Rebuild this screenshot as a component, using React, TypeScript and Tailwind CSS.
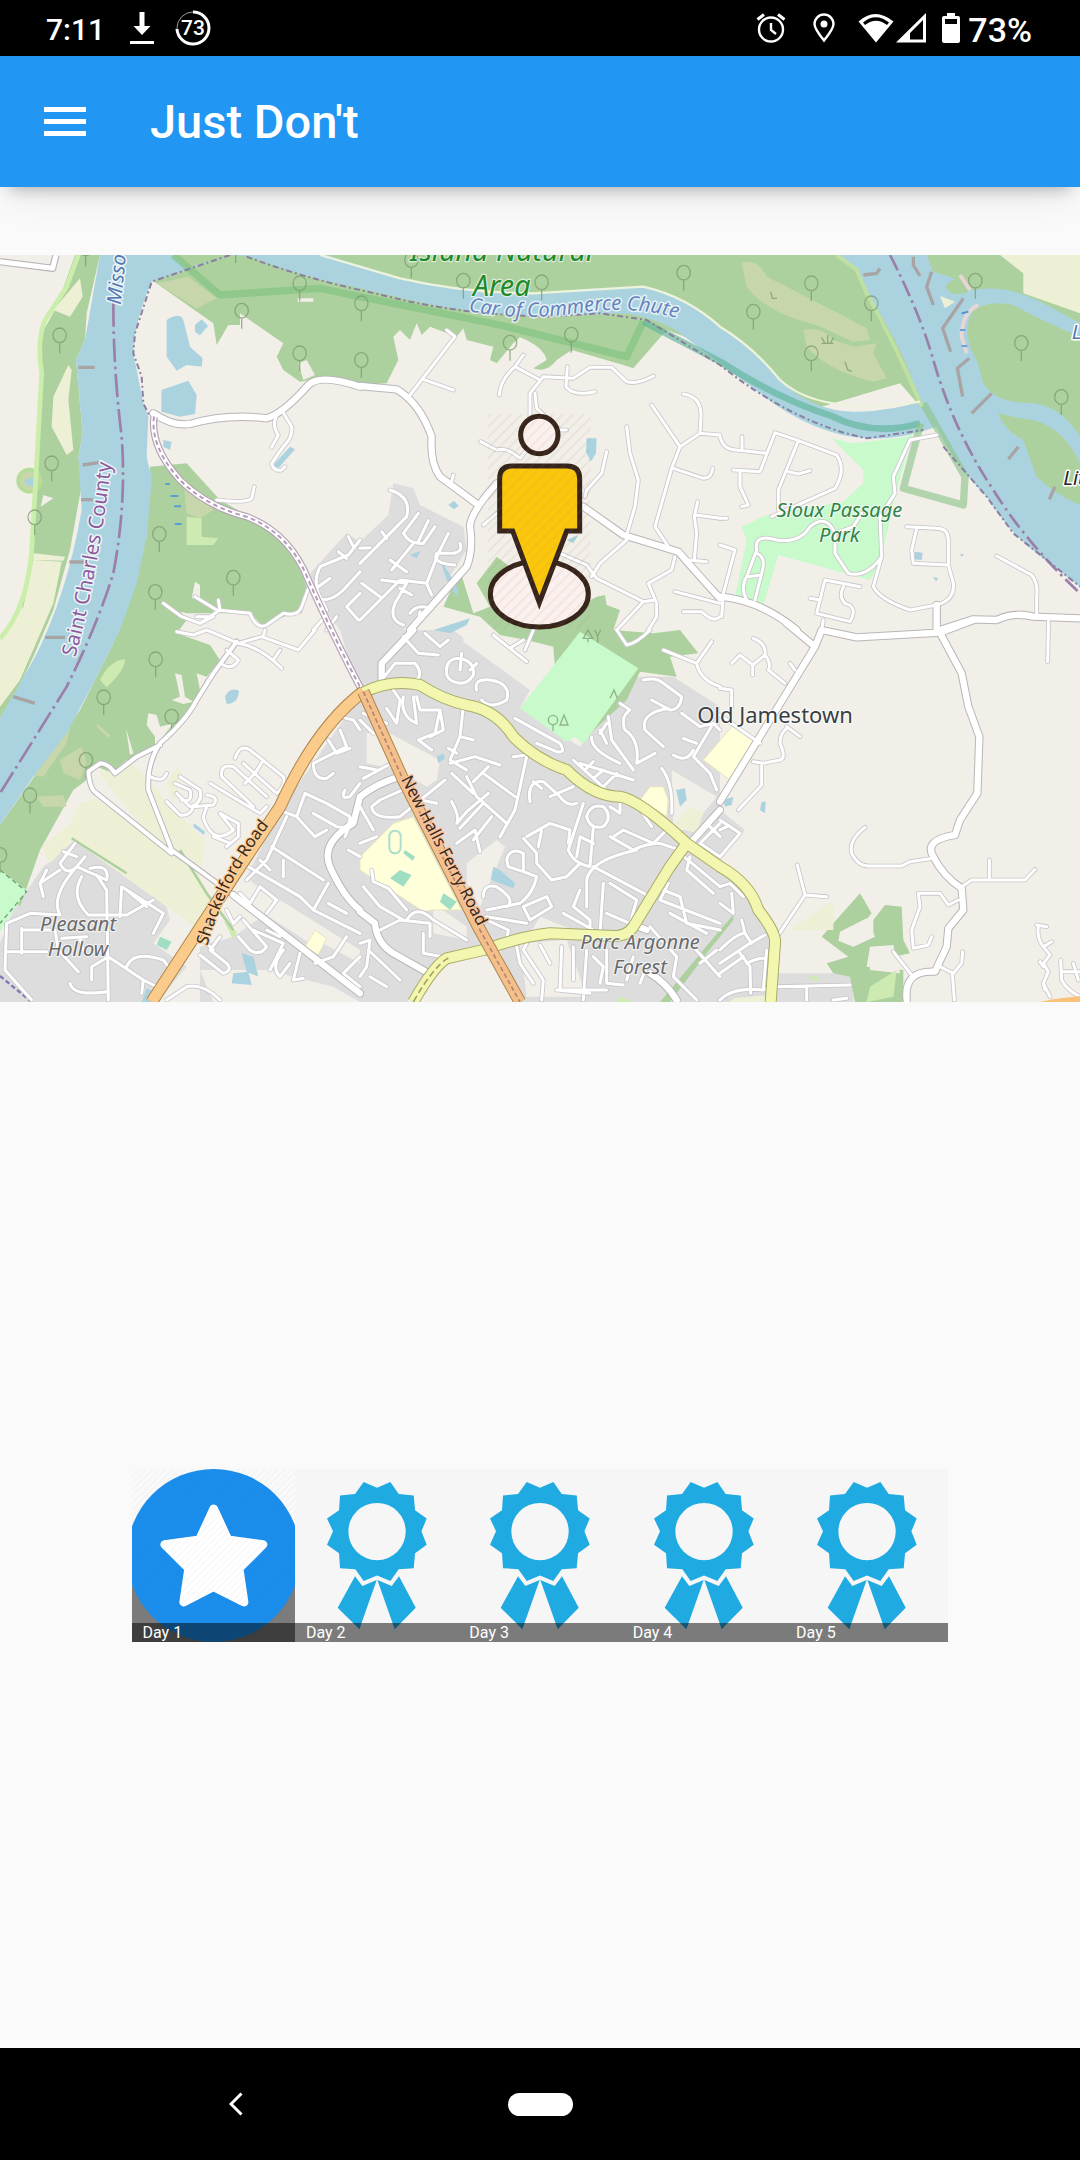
import React from "react";

/* ---------- Map data: six tiles of 1080 x 1140 map units each ---------- */

const TILES = [
  "translate(0 0)",
  "translate(1080 0)",
  "translate(2160 0)",
  "translate(0 1140)",
  "translate(1080 1140)",
  "translate(2160 1140)",
];

const MINOR: string[] = [
  // north west
  "M845,480 L875,530 Q880,560 850,590 L815,640 Q820,665 845,660 L855,650 M838,485 Q810,520 835,555 L815,592 M650,750 Q740,760 755,745 L763,710 M1080,870 L1045,915 L960,950 Q940,990 955,1030 L980,1080 M1045,860 L1060,890 M1015,905 L1040,925 M955,1010 L990,985 M965,1050 Q1000,1050 1030,1020 L1080,965 M1080,1030 L1040,1070 L1075,1110 M975,1100 L940,1140 M980,1140 L1010,1100 M585,1040 L650,1080 L750,1090 Q770,1140 800,1125 L850,1090 Q895,1100 905,1070 L925,1015 M590,1100 L640,1100 L600,1120 L660,1080 L655,1050 M490,1060 L545,1100 L600,1120",
  // north centre
  "M260,240 L285,260 L150,435 M190,388 L280,420 M490,315 L465,350 L540,390 M465,350 Q420,390 418,435 M510,500 L510,430 L550,380 L640,385 L690,352 L755,352 L800,395 Q830,405 880,378 M622,350 L618,410 Q640,440 705,425 M525,430 L530,475 L600,540 L620,540 M362,575 L410,600 Q440,590 480,625 L500,600 M970,432 Q1025,440 1023,500 L1020,550 L960,590 L875,465 M1020,550 L1080,555 M960,590 L935,655 L885,830 L925,890 M940,655 L1030,685 Q1055,685 1058,655 M800,530 L810,610 L835,690 L825,770 L800,855 M740,605 L725,670 L680,720 L675,740 M800,870 L720,940 L695,980 M600,910 L680,945 L710,985 L850,1055 L770,1140 M945,920 L935,960 L865,1000 L890,1060 L890,1100 L865,1140 M850,1055 L885,1050 M1013,755 L1003,800 L1010,850 L1003,930 M1008,795 L1080,805 M985,930 L1040,935 M945,1025 L1080,1060 M970,1085 L1025,1085 Q1060,1120 1080,1100 M410,790 L370,825 M280,675 L275,695 M0,940 L140,800 Q155,740 90,720 M65,845 L80,865 M0,895 L30,893 M175,790 L130,850 Q150,885 190,880 L225,830 M205,812 L175,875 M160,880 L95,960 M265,850 L235,910 L200,1000 L120,990 L0,1110 M90,930 L140,965 M65,990 L140,1000 L105,1060 Q85,1110 130,1125 M5,1000 L60,1040 M120,1015 L155,1035 M300,880 Q310,905 280,910 L230,910 Q215,940 285,945 M200,1000 L215,1035 M150,1090 Q170,1060 215,1075 M180,1085 L175,1115",
  // north east
  "M0,560 Q10,600 50,600 L140,610 M66,560 L66,600 M235,572 L175,720 L175,780 M205,665 L235,672 L270,662 M155,800 L345,715 Q380,660 350,615 L235,572 L165,548 L120,665 L40,660 M60,665 L60,710 L85,765 L65,770 M650,555 L570,570 L520,680 L525,730 L480,800 L485,920 Q440,985 385,970 L345,910 L345,850 L400,830 L425,790 M345,850 Q320,790 270,830 Q240,880 170,870 Q100,850 110,900 L80,980 Q60,1010 80,1050 M110,910 Q140,920 125,970 L105,1050 M85,980 L125,975 M485,920 L460,1010 Q480,1050 570,1080 L650,1065 M560,830 L650,835 Q685,835 685,870 L685,945 L580,940 L575,900 L590,835 M685,945 L700,1000 Q705,1050 650,1065 M830,918 L935,975 Q955,1000 950,1040 L950,1100 M0,885 L45,900 L10,1030 L5,1100 M420,1010 L315,990 L290,1090 L390,1115 Q415,1070 375,1060 Q355,1040 370,1010 M270,1045 L300,1050 M310,1110 L305,1140 M985,1110 L985,1140 M0,805 L20,805",
  // south west
  "M530,5 L580,15 L620,0 L715,40 M715,40 L785,20 L895,60 L945,0 M790,20 L795,0 M715,40 Q780,50 845,115 M820,90 L840,60 M680,60 L715,90 Q700,120 670,105 M450,440 Q490,460 500,430 M705,385 Q720,340 750,360 L850,440 Q860,465 830,490 L730,400 M665,440 Q660,400 700,410 L800,500 M665,440 L760,530 M765,430 L790,390 M735,460 L765,430 M630,460 L780,550 L800,530 M525,460 L570,480 Q580,520 545,510 M540,440 L600,480 Q610,520 570,530 L530,490 M500,515 L540,555 Q570,560 580,530 L640,525 Q660,500 620,495 M610,560 L620,530 M610,565 Q640,650 700,600 L660,550 L715,580 L715,620 L680,650 M640,620 L690,640 M225,640 L180,700 Q200,740 230,710 L255,680 M190,665 L230,680 M180,720 L120,760 L130,800 M140,720 L120,760 M230,710 L320,750 Q330,700 270,715 M230,710 Q150,800 180,855 L90,850 M245,740 Q210,800 265,855 M290,735 L320,780 L325,1110 M265,855 L380,855 L460,810 M360,860 L365,770 L490,850 L460,910 M380,780 L440,830 M90,850 L20,880 L15,1020 L95,1110 M65,895 L65,970 M65,900 L150,900 M20,965 L140,965 M165,900 L175,960 L235,1025 M185,925 L260,920 M240,925 L250,960 M325,980 L275,1010 L275,1050 M325,980 L430,1050 L470,1070 M380,1010 Q400,960 490,990 L505,1010 M430,1050 L425,1090 M210,1060 Q220,1100 320,1085 M600,975 L670,1030 Q700,1020 680,1000 L630,960 L660,920 M610,930 L640,960 M730,870 L800,950 Q780,980 750,960 L715,920 M760,900 L850,940 L810,1020 M800,900 L840,920 M680,840 L700,880 L720,860 M1020,260 L1060,270 L1080,300 M985,330 L1010,370 L1050,355 M1020,300 L1040,350 L940,400 Q940,450 980,445 L1000,430 M850,545 L890,560 L915,490 L980,520 L1050,560 Q1050,600 1010,590 L940,550 M890,560 L945,620 L980,600 M860,560 L800,690 L740,750 M815,650 L970,750 M850,690 L850,740 M1070,540 L1035,620 M1045,660 L1080,680 M745,710 L900,800 L940,840 L985,760 M780,690 L810,720 M940,840 L1080,910 M985,820 L1040,850 M850,960 Q810,1010 840,1040 L870,1000 M900,970 L880,1050 L910,1045 M945,1000 L1000,980 L1040,920 M1080,980 L1030,1030 L1080,1070 M500,1110 L560,1070 Q610,1060 660,1110 M720,790 L750,820 L780,770 L830,810 L800,850 M1035,480 Q1020,510 1050,500 L1080,460",
  // south centre
  "M130,20 L175,70 L235,75 M195,10 L240,50 L265,30 M65,150 L105,100 L165,100 Q190,130 170,150 M260,130 Q255,85 300,85 Q345,95 340,135 Q320,170 280,155 Q260,145 260,130 M305,70 L300,120 M350,100 L330,120 M350,180 Q340,145 390,150 Q455,160 440,210 Q390,240 365,210 M400,15 L450,55 L500,95 M450,55 L490,30 M520,0 L495,60 M770,0 L800,45 Q830,40 870,0 M1055,35 L1010,100 L910,60 M1010,100 Q1020,150 1080,170 M850,150 Q890,140 910,160 L965,200 Q960,240 930,240 L875,210 M925,235 Q840,250 855,300 L910,350 M965,250 L1020,290 L1060,280 L1080,300 M1060,280 L1000,380 L1050,430 L1070,480 M940,375 Q980,400 1000,360 M970,325 L1010,340 M780,220 L810,240 Q780,260 795,300 Q840,330 830,400 L885,370 M745,260 L755,330 L820,420 M695,320 Q690,360 780,400 M740,280 L720,310 M465,265 L600,340 Q620,370 590,365 L530,340 M460,380 L500,375 M640,390 L750,490 M660,400 L820,450 M700,395 L675,420 M730,420 L700,445 M770,430 L735,465 M80,235 L110,280 L120,210 L100,180 M130,200 Q120,260 170,280 L160,200 M170,200 L180,240 L240,240 L225,310 L175,330 L215,360 M240,240 L250,300 L210,320 M310,230 L300,320 L270,390 L320,420 M300,320 L340,330 M270,400 L345,380 L420,405 M265,355 L290,370 M500,380 L465,540 L420,620 M320,440 L350,500 L440,580 M275,430 L340,490 M370,430 L465,500 M340,455 L385,410 M255,450 L120,560 Q40,570 35,530 L60,510 M60,510 L150,470 M180,510 L230,520 M275,515 Q300,560 290,580 L320,545 M320,545 L385,490 M300,595 L370,520 M340,630 L395,560 M290,640 L345,600 L360,665 M510,515 Q500,450 550,455 L600,500 Q620,530 650,520 M570,500 L640,470 M545,475 L520,455 M680,560 Q690,520 730,530 Q760,560 730,590 Q690,600 680,560 M750,530 L780,550 M500,620 L570,580 L630,600 L625,640 M490,625 L530,670 L530,700 L575,750 L620,740 L660,700 M535,650 L545,600 M670,520 L625,660 Q640,700 690,710 L700,590 M650,680 L660,620 L700,640 M440,690 Q450,650 490,670 L490,725 L445,710 L440,690 M490,725 L530,740 Q520,790 480,820 L380,840 M370,800 Q370,760 410,770 Q470,810 440,830 M490,830 L560,800 L575,830 L510,870 L490,830 M500,880 L380,860 M750,620 L820,660 Q860,640 900,640 L960,660 M760,620 L790,600 L880,640 L920,600 M830,660 Q690,690 680,750 L680,830 M700,710 L870,800 M730,760 L720,910 M660,780 L640,830 L690,870 M750,760 L830,810 L810,880 L740,850 M610,850 L700,900 M690,870 L690,930 M10,250 L80,280 M0,270 L40,310 M0,410 L50,420 M10,445 L85,405 M0,530 L40,600 M0,640 L50,620 M960,670 L1080,770 M990,680 L980,720 L1060,790 M910,780 L960,800 L980,880 L1080,900 M925,760 L900,810 L1080,880 M930,850 L1040,910 M870,890 L950,980 M950,980 L940,1040 L1010,1110 M1000,950 L1080,1040 M1020,1000 L1070,960 M35,720 L40,755 L85,775 M10,770 L60,830 L130,870 M85,775 L140,840 M140,870 Q170,820 220,870 L320,930 M60,900 L120,870 L210,880 L210,920 M190,910 L190,970 L270,985 M0,940 L30,930 L20,1010 L0,1040 M30,1040 L80,1070 M25,960 L120,1050 M500,940 L490,960 L550,1050 L545,1110 M470,950 L480,1000 L520,1060 M540,945 L570,1000 M605,950 L600,1080 L740,1080 M640,950 L640,1050 M590,1080 L690,1090 M680,960 L670,1110 M700,980 L730,1010 L720,1060 M740,960 L740,1060 L790,1065 M820,980 L800,1050 M860,1010 L840,1060 M440,930 L445,900 L380,870 M720,300 L740,340 M845,545 L875,590 M780,520 L780,550 M905,415 Q940,460 935,550 M1080,580 L1020,640 M1050,590 L1080,620 M1020,640 L1080,680",
  // south east
  "M100,25 Q140,40 135,75 L98,105 L98,135 M98,105 L60,75 L35,100 M135,75 Q155,100 145,120 L195,160 M210,100 L225,120 M0,175 L35,180 L35,230 M0,255 L120,340 M200,290 L240,320 M200,295 Q180,310 180,340 Q200,385 180,390 L130,400 L100,395 M125,405 L125,465 L55,540 M985,0 L983,95 M435,592 Q385,630 395,670 Q415,710 450,708 L545,708 L570,695 L640,685 M725,770 L755,750 L915,750 L945,718 M808,690 L808,750 M715,810 L685,825 L660,790 L595,790 L600,830 L575,900 L580,955 L625,945 L635,920 M232,705 L255,795 L320,800 M255,795 L175,915 M520,965 L575,1035 M728,965 L725,1000 L700,1030 L660,1010 M697,1030 L703,1110 M950,885 L980,890 M955,890 Q950,925 970,950 L990,975 L970,1000 L985,1025 L970,1060 L990,1100 M970,950 L995,935 M960,995 L970,1010 M970,1060 L975,1080 M1022,990 L1025,1050 Q1040,1080 1080,1100 M1025,1025 L1080,1025 M1060,1000 L1075,1050 M0,570 L60,610 L0,680 M0,600 L20,590 M0,770 L30,760 L70,800 M0,820 L40,850 L35,790 M65,870 L75,910 L95,940 M135,915 L90,940 L0,1000 M0,1030 L70,980 M60,970 L90,1010 L92,1090 M80,1000 Q110,985 130,985 M140,960 L130,1080 M0,1110 Q40,1070 130,1080 L165,1070 L390,1065 M260,1075 L260,1110 M340,1110 L380,1105 M0,960 Q50,910 75,910",
];

const MEDIUM: string[] = [
  "M460,490 Q520,530 570,522 Q680,490 800,505 Q850,490 925,405 Q960,370 1080,410",
  "M0,408 L110,418 Q180,460 215,560 Q210,640 240,680 L355,765 M150,1140 L320,950 Q340,900 330,830 Q330,790 410,700 M670,770 L790,855 L955,905 Q1020,980 1080,1045",
  "M0,1040 Q120,1050 230,1140 M660,1140 L760,1108 L830,1110 Q880,1085 940,1100 L1080,1105 M650,1065 L650,1140",
  "M700,795 L1080,1090 M1080,500 L1060,580 Q960,640 990,710 Q1030,800 1080,840",
  "M160,0 L65,100 L65,150 M0,500 Q50,460 120,440 M0,845 L45,880 Q50,940 100,970 L215,1035 M835,890 L860,900 M870,1030 Q920,1060 950,1110 M990,640 L1080,540",
  "M0,515 L285,50 L305,0 M200,-20 L285,50 M305,0 L410,22 L660,8 L760,-30 M660,8 L725,130 L745,230 L778,320 L772,490 L720,570 L705,615 Q610,630 640,680 Q670,740 725,775 L730,840 L685,895 L680,950 L645,1025 Q550,1020 560,1110",
];

const LOCAL: string[] = [
  "",
  "",
  "",
  "M710,35 L640,130 L590,210 Q560,270 480,340 Q440,400 445,480 L515,660 L700,795 M480,345 L410,380 L345,430 Q325,400 300,400 L265,425 Q270,480 290,490 L515,670",
  "",
  "",
];

const TREES: [number, number][] = [
  [179, 256], [155, 640], [104, 802], [478, 852], [466, 1026], [700, 983], [899, 100], [899, 310],
  [725, 182], [257, -5], [707, -15], [1084, 330], [1084, 160], [1234, 30], [1390, 92], [1625, 97],
  [2051, 68], [1714, 254], [1530, 278], [2260, 185], [2434, 100], [2434, 310], [2614, 160],
  [2926, 92], [3064, 279], [3184, 441], [467, 1228], [311, 1342], [515, 1400], [90, 1636],
  [258, 1530], [0, 1815],
];

function Tiled({ paths, stroke, width }: { paths: string[]; stroke: string; width: number }) {
  return (
    <g fill="none" stroke={stroke} strokeWidth={width} strokeLinecap="round" strokeLinejoin="round">
      {paths.map((d, i) => (d ? <path key={i} d={d} transform={TILES[i]} /> : null))}
    </g>
  );
}

function Line({ d, stroke, width, dash, opacity }: { d: string; stroke: string; width: number; dash?: string; opacity?: number }) {
  return <path d={d} fill="none" stroke={stroke} strokeWidth={width} strokeDasharray={dash} opacity={opacity} strokeLinejoin="round" />;
}

function Landcover() {
  return (
    <g>
      {/* residential */}
      <g fill="#dedddd">
        <path d="M1180,700 L1240,715 L1260,765 L1390,830 L1400,900 L1330,1010 L1210,1140 L1360,1140 L1590,1320 L1560,1375 L1740,1490 L1820,1360 L1910,1280 L2020,1280 L2160,1370 L2160,1680 L2235,1740 L2160,1830 L2260,1920 L2320,2060 L2320,2170 L2560,2170 L2560,2256 L1560,2256 L1500,2100 L1350,2110 L1220,2256 L600,2256 L600,2090 L700,2060 L800,1990 L1080,2140 L1080,2100 L760,1900 L740,1880 L840,1680 L1080,1340 L1020,1140 L960,1060 L930,970 L1040,850 L1080,875 L1165,795 Z" />
        <path d="M0,2080 L40,1980 L130,1850 L225,1770 L500,1970 L510,2010 L460,2080 L560,2150 L470,2256 L0,2256 Z" />
        <path d="M2320,2190 L2560,2170 L2560,2256 L2320,2256 Z" />
      </g>
      {/* open land inside the suburb */}
      <g fill="#f2efe9">
        <path d="M1390,1140 L1640,1140 L1670,1160 L1590,1320 L1390,1175 Z" />
        <path d="M1100,1450 L1150,1440 L1320,1530 L1310,1590 L1280,1610 L1200,1560 L1100,1540 Z" />
        <path d="M1490,1770 L1515,1790 L1440,1970 L1400,1900 L1400,1840 Z" />
        <path d="M2015,1560 L2150,1640 L2070,1740 L2020,1740 Z" />
        <path d="M1620,2000 L1720,2040 L1590,2050 Z" />
        <path d="M850,1970 L970,2050 L930,2080 L790,1990 Z" />
        <path d="M1300,1960 L1400,2030 L1400,2070 L1300,2050 Z" />
        <path d="M1300,2160 L1470,2120 L1560,2256 L1240,2256 Z" />
        <path d="M600,2160 L800,2160 L1000,2210 L1080,2256 L640,2256 Z" />
        <path d="M1560,2080 L1700,2070 L1760,2240 L1580,2240 Z" />
      </g>
      {/* woodland */}
      <g fill="#add19e">
        <path d="M225,15 L300,15 L260,190 L255,270 L228,330 L248,550 L235,620 L248,690 L210,900 L160,1080 L100,1220 L40,1345 L0,1405 L0,1200 L60,1110 L95,900 L110,640 L125,370 L120,260 L170,170 Z" />
        <path d="M500,15 L1200,15 L1900,15 L3240,15 L3240,800 L2840,560 L2700,400 L2400,490 L2160,300 L2000,240 L1900,355 L1870,345 L1715,300 L1670,330 Q1640,370 1600,355 L1640,330 Q1630,290 1560,262 L1540,280 L1490,340 L1470,330 L1480,290 L1400,270 L1390,235 L1370,260 L1290,230 L1265,255 L1250,220 L1230,270 L1200,240 L1180,260 L1195,330 L1160,400 L1080,405 L960,385 L900,395 L850,360 L830,320 L850,280 L720,190 L720,225 L685,225 L650,285 L640,220 L455,90 Z" />
        <path d="M450,650 L560,640 L660,750 L800,830 Q900,920 925,1030 L905,1090 L850,1100 L790,1130 L750,1090 L655,1090 L560,1090 L490,1070 L545,900 L570,910 L510,1040 L560,1110 L530,1150 L630,1185 L660,1230 L620,1280 L590,1350 L470,1490 L340,1570 L290,1550 L260,1590 L220,1620 L120,1800 L60,1970 L0,1880 L0,1725 L110,1570 L240,1380 L340,1180 L370,1090 L440,860 Z" />
        <path d="M1490,920 L1530,950 L1480,990 L1530,1060 L1700,1090 L1790,1040 L1815,1035 L1820,1065 L1860,1080 L1840,1140 L1960,1150 L2040,1140 L2095,1210 L2010,1220 L2030,1280 L1920,1265 L1880,1350 L1760,1460 L1670,1320 L1660,1190 L1580,1170 L1500,1155 L1440,1100 L1330,1070 L1380,960 L1420,1090 L1470,1070 L1430,1000 Z" />
        <path d="M2580,1930 L2615,1990 L2590,2020 L2520,2070 L2550,2080 L2620,2060 L2620,2010 L2655,1965 L2705,1970 L2710,2070 L2730,2110 L2680,2120 L2610,2090 L2600,2150 L2710,2160 L2710,2256 L2565,2256 L2550,2180 L2500,2170 L2480,2140 L2545,2120 L2465,2060 L2500,2020 Z" />
        <path d="M1980,2256 L2160,2040 L2200,1995 L2200,2010 L2120,2110 L2010,2256 Z" />
      </g>
      <g fill="#f2efe9">
        <path d="M525,1270 L545,1275 L555,1340 L580,1355 L550,1362 L515,1350 L540,1340 Z" />
        <path d="M445,1390 L470,1395 L480,1430 L520,1420 L465,1490 L465,1460 L440,1425 Z" />
        <path d="M590,1270 L620,1280 L600,1320 Z M585,995 L600,1005 L600,1050 L575,1045 Z M378,1435 L400,1510 L390,1515 Z" />
        <path d="M895,340 L920,330 L945,375 L910,390 Z M893,145 L940,145 L940,155 L893,155 Z M130,735 L160,745 L122,770 Z" />
        <path d="M2520,2045 L2600,2005 L2625,2060 L2560,2090 L2515,2072 Z M2610,2090 L2680,2085 L2700,2170 L2610,2160 Z" />
      </g>
      {/* farmland */}
      <g fill="#eef0d5">
        <path d="M240,85 L248,140 L210,200 L160,180 Z" />
        <path d="M205,345 L215,360 L205,450 L220,600 L200,615 L155,530 L160,440 Z" />
        <path d="M100,930 L185,935 L160,1060 L60,1290 L0,1370 L0,1160 L70,1070 Z" />
        <path d="M100,910 L195,920 L190,932 L100,930 Z" />
        <path d="M3000,15 L3240,15 L3240,190 L3070,130 L3070,70 Z" />
        <path d="M290,1560 L340,1565 L380,1530 L440,1580 L520,1680 L615,1770 L605,1860 L560,1830 L450,1760 Z" />
        <path d="M500,1600 L530,1550 L545,1570 L520,1660 Z" />
        <path d="M290,1645 L500,1790 L600,1880 L640,1960 L600,2040 L220,1770 L150,1840 L125,1790 L210,1720 L240,1660 Z" />
        <path d="M2500,1950 L2500,2040 L2370,2040 Z M2070,1670 L2110,1690 L2090,1750 L2020,1730 Z M2200,2245 L2310,2235 L2310,2256 L2190,2256 Z" />
      </g>
      <g fill="#cdebb0">
        <path d="M560,800 L605,805 L605,860 L655,865 L640,885 L560,885 Z" />
        <path d="M300,1290 Q330,1230 375,1228 Q375,1260 320,1312 Z" />
        <path d="M670,2010 L710,2045 L700,2070 Z M2610,2210 L2690,2160 L2680,2240 L2600,2256 Z M1860,2240 L1900,2256 L1850,2256 Z M2420,2180 L2460,2180 L2450,2195 Z" />
      </g>
      {/* scrub and sand bars */}
      <g fill="#c8d7ab">
        <path d="M470,100 L565,80 L650,145 L590,175 Z" />
        <path d="M550,690 L640,780 L600,805 L560,790 Z" />
        <path d="M2225,40 Q2270,20 2300,80 Q2460,160 2600,235 L2610,270 L2560,275 L2450,225 Q2300,190 2240,110 Z" />
        <path d="M2410,240 Q2470,230 2500,270 L2560,290 L2630,280 L2620,310 L2660,385 L2620,395 Q2480,360 2420,290 Z" />
        <path d="M210,1430 L200,1480 L130,1580 L100,1575 Z M180,1530 L245,1490 L260,1540 L240,1590 L190,1570 Z M110,1640 L190,1635 L200,1670 L130,1670 Z M290,1420 L330,1455 L325,1465 L290,1430 Z" />
      </g>
      <circle cx="88" cy="692" r="34" fill="#c8d7ab" stroke="#b4dd96" strokeWidth="10" />
      {/* parks */}
      <g fill="#c8facc">
        <path d="M1740,1145 L1915,1255 L1750,1482 L1725,1460 L1700,1475 L1560,1375 Z" />
        <path d="M2495,565 L2560,580 L2720,560 L2740,545 L2690,720 L2640,940 L2610,990 L2335,915 L2290,1065 L2205,1040 L2240,870 L2225,830 L2300,795 L2530,755 L2590,700 L2590,660 Z" />
        <path d="M0,1860 L80,1920 L0,2045 Z" />
      </g>
      <g fill="#ffffd9" stroke="#e6e3c0" strokeWidth="3">
        <path d="M1180,1720 L1240,1700 L1385,1980 L1300,1980 L1270,1985 L1080,1860 L1080,1820 Z" />
        <path d="M2200,1425 L2270,1480 L2190,1590 L2110,1530 Z" />
        <path d="M1950,1610 L1990,1610 L2005,1650 L2000,1700 L1920,1650 Z" />
        <path d="M945,2040 L980,2065 L955,2115 L915,2090 Z" />
      </g>
      <g fill="#a0dec4">
        <path d="M1200,1860 L1235,1875 L1210,1910 L1170,1885 Z M1330,1930 L1370,1955 L1350,1980 L1320,1955 Z M1215,1800 L1245,1820 L1238,1832 L1210,1810 Z" />
        <path d="M480,2060 L515,2075 L500,2100 L470,2085 Z" />
      </g>
      <rect x="1168" y="1742" width="34" height="68" rx="17" fill="none" stroke="#a9e0cb" strokeWidth="6" />
    </g>
  );
}

function Water() {
  return (
    <g>
      <g fill="#aad3df">
        <path d="M300,15 L520,15 L560,55 L690,15 L980,15 L1200,85 Q1400,130 1600,130 L1780,115 L1930,110 Q2060,140 2160,230 Q2260,290 2340,390 Q2440,490 2580,485 Q2680,480 2760,455 Q2710,290 2600,130 Q2580,50 2510,15 L2780,15 L2800,65 L2850,80 L2920,120 Q3020,100 3140,165 L3240,220 L3240,260 Q3120,210 3040,165 Q2970,150 2920,180 Q2880,250 2930,330 L2950,400 Q2990,460 3080,458 Q3180,460 3240,560 L3240,640 Q3180,510 3060,505 L2995,490 Q3010,540 3070,570 L3110,680 Q3160,730 3240,765 L3240,1010 L3110,910 Q3030,850 2960,740 Q2860,640 2810,530 Q2700,570 2600,565 Q2440,555 2280,430 L2160,340 L2060,265 Q1980,200 1860,190 L1640,200 Q1400,190 1230,150 L1080,115 Q900,80 750,20 L690,15 L455,95 Q425,160 405,250 L400,310 L430,460 L445,500 L440,620 L455,690 L440,860 L410,1000 L360,1140 L280,1300 L200,1450 L100,1580 L0,1725 L0,1405 L100,1230 Q200,1040 245,780 L235,620 L248,550 L228,330 L255,270 Z" />
        <path d="M500,210 Q540,185 550,210 L570,290 L608,325 L605,350 L560,345 L530,362 L500,320 Z M585,225 L605,208 L624,228 L600,256 L585,245 Z M484,420 L565,392 L590,435 L585,492 L540,500 L484,485 Z" />
        <path d="M870,590 L885,598 L835,655 L820,645 Z M490,570 L515,575 L510,600 L490,590 Z M72,690 L110,680 L100,710 L80,705 Z M435,625 L455,675 L440,690 Z" />
        <path d="M1760,565 L1790,565 L1788,610 L1772,635 L1758,605 Z M1345,765 L1362,752 L1376,768 L1362,778 Z M1230,915 L1262,902 L1250,925 Z M1320,930 L1345,965 L1375,1020 L1370,1040 L1340,990 Z M1700,870 L1735,855 L1720,880 Z M1300,1140 L1410,1105 L1400,1125 L1350,1150 Z" />
        <path d="M2745,905 L2768,908 L2765,930 L2742,928 Z M2800,980 L2815,985 L2808,995 Z M2880,912 L2892,912 L2885,920 Z M675,1340 Q690,1310 717,1322 Q715,1360 680,1362 Z M582,1720 L615,1745 L612,1755 L580,1730 Z" />
        <path d="M725,2110 L760,2120 L775,2180 L740,2165 Z M700,2170 L745,2165 L755,2205 L695,2200 Z M1480,1850 L1500,1860 L1545,1900 L1540,1915 L1472,1890 Z M1310,1520 L1330,1510 L1335,1525 L1315,1540 Z M2028,1620 L2055,1615 L2060,1650 L2040,1670 Z M2170,1650 L2200,1640 L2195,1665 L2175,1670 Z M2285,1655 L2297,1655 L2295,1690 L2280,1680 Z M440,2215 L470,2230 L450,2256 L425,2256 Z" />
      </g>
      <path d="M2835,110 Q2860,75 2910,90 Q2925,120 2890,130 Q2850,140 2835,110" fill="#add19e" />
      <path d="M2820,138 L2865,155 L2835,175 Z" fill="#eef0d5" />
      {/* wing dams */}
      <g stroke="#a9a4a4" strokeWidth="10" fill="none">
        <path d="M235,352 L284,352 M248,645 L300,637 M243,749 L278,749 M208,936 L265,936 M135,1162 L195,1162 M40,1340 L105,1360" />
        <path d="M2590,75 L2630,70 L2640,55 M2740,20 L2740,45 L2760,78 M2795,65 L2780,110 L2800,165 M2890,145 L2828,235 L2852,305 M2908,325 L2872,355 L2888,440 M2975,430 L2915,490 M3055,590 L3025,628 M3165,710 L3148,748" />
      </g>
      <path d="M496,702 L510,702 M512,738 L535,738 M522,769 L543,769 M524,822 L545,822" stroke="#5a9fd4" strokeWidth="6" />
    </g>
  );
}

function Boundaries() {
  const edge = "#9b7fa6";
  return (
    <g>
      <Line d="M520,15 L660,135 L960,115 L1080,140 L1500,225 L1880,320 L1930,215" stroke="#7fc37f" width={22} opacity={0.65} />
      <Line d="M1930,215 L2160,335 Q2340,450 2500,500 Q2620,560 2760,520" stroke="#5fb39a" width={20} opacity={0.65} />
      <Line d="M2762,520 L2710,715 L2890,765 L2895,680 L2770,460" stroke="#8fc48c" width={22} opacity={0.65} />
      <Line d="M2510,15 L2570,60 L2600,130 Q2690,290 2765,470" stroke="#bfe0a0" width={12} />
      <Line d="M960,15 L1200,85 Q1400,130 1600,130 L1930,110 Q2060,140 2160,230 Q2260,290 2340,390 Q2460,500 2760,455" stroke="#eef3dc" width={7} />
      <Line d="M235,15 L200,110 L135,210 Q110,270 125,370 L110,640 L95,900 Q80,1080 0,1165" stroke="#cbeeaa" width={14} />
      <Line d="M340,160 Q340,360 365,560 Q380,760 340,970 Q290,1130 200,1310 L0,1630" stroke={edge} width={8} dash="70 14 8 14" />
      <Line d="M2670,15 Q2760,190 2800,330 Q2860,540 2980,720 Q3080,880 3240,1030" stroke={edge} width={8} dash="50 14 8 14" />
      <Line d="M690,15 L455,95 L405,250 L400,310 L425,380 L430,460 L450,500 M740,20 Q900,80 1080,120 L1230,155 Q1420,195 1640,200 L1800,190 L1940,210 L2160,345 Q2380,520 2600,565 L2770,540 M2830,590 L2960,740 L3040,850 L3240,1010" stroke="#8a7fa0" width={6} dash="18 9 6 9" />
      <Line d="M0,2178 L95,2256" stroke="#7a78b8" width={7} dash="14 8" />
      <Line d="M0,1860 L80,1925 L0,2020" stroke="#6aa070" width={4} dash="14 10" />
      <Line d="M2880,75 L2910,120 M2935,165 Q2885,190 2885,260 L2900,310" stroke="#e6d6d6" width={12} />
      <Line d="M2885,190 L2905,185 M2880,240 L2896,240 M2885,288 L2902,288" stroke="#4a8fd0" width={5} />
    </g>
  );
}

function MapLabels() {
  return (
    <g fontFamily='"Noto Sans", sans-serif' textAnchor="middle" paintOrder="stroke" strokeLinejoin="round">
      <defs>
        <path id="label-county" d="M226,1222 Q300,950 342,570" />
        <path id="label-missouri" d="M362,165 L392,-120" />
        <path id="label-chute" d="M1405,183 Q1570,218 1760,185 Q1920,165 2065,215" />
        <path id="label-shackelford" d="M622,2088 Q680,1880 820,1710" />
        <path id="label-halls" d="M1202,1588 L1470,2100" />
      </defs>
      <g fontStyle="italic" fill="#1f8a2c" stroke="#ffffff" strokeOpacity="0.6" strokeWidth="7" fontSize="86">
        <text x="1505" y="34">Island Natural</text>
        <text x="1505" y="139">Area</text>
      </g>
      <g fontStyle="italic" fill="#35804a" stroke="#ffffff" strokeOpacity="0.6" strokeWidth="7" fontSize="60">
        <text x="2518" y="802">Sioux Passage</text>
        <text x="2518" y="875">Park</text>
      </g>
      <g fontStyle="italic" fill="#6a6a6a" stroke="#ffffff" strokeOpacity="0.6" strokeWidth="7" fontSize="60">
        <text x="234" y="2044">Pleasant</text>
        <text x="234" y="2117">Hollow</text>
        <text x="1920" y="2098">Parc Argonne</text>
        <text x="1920" y="2171">Forest</text>
      </g>
      <g fill="#3a3f44" stroke="#ffffff" strokeOpacity="0.7" strokeWidth="7" fontSize="66">
        <text x="2325" y="1419">Old Jamestown</text>
      </g>
      <g textAnchor="start" stroke="#ffffff" strokeWidth="9">
        <text fontSize="61" fill="#8d5c9c" strokeOpacity="0.8">
          <textPath href="#label-county">Saint Charles County</textPath>
        </text>
        <text fontSize="60" fontStyle="italic" fill="#5478b4" strokeOpacity="0.8">
          <textPath href="#label-missouri">Missouri</textPath>
        </text>
        <text fontSize="60" fontStyle="italic" fill="#6583bd" strokeOpacity="0.7">
          <textPath href="#label-chute">Car of Commerce Chute</textPath>
        </text>
        <text fontSize="50" fill="#3a2a18" stroke="#fbcf9d" strokeWidth="8">
          <textPath href="#label-shackelford">Shackelford Road</textPath>
        </text>
        <text fontSize="50" fill="#3a2a18" stroke="#f6c4a0" strokeWidth="8">
          <textPath href="#label-halls">New Halls Ferry Road</textPath>
        </text>
        <text x="3190" y="706" fontSize="60" fontStyle="italic" fill="#222222">Little</text>
        <text x="3215" y="266" fontSize="60" fontStyle="italic" fill="#5478b4">L</text>
      </g>
    </g>
  );
}

function Marker() {
  return (
    <g>
      <defs>
        <pattern id="marker-hatch" width="22" height="22" patternUnits="userSpaceOnUse" patternTransform="rotate(45)">
          <rect width="6" height="22" fill="#a09070" fillOpacity="0.1" />
        </pattern>
      </defs>
      <g stroke="#36231a" strokeWidth="15">
        <ellipse cx="1618" cy="1032" rx="147" ry="99" fill="#fcf0ee" />
        <circle cx="1618" cy="555" r="56" fill="#fcf0ee" />
        <path d="M1499,843 V686 Q1499,648 1537,648 H1701 Q1739,648 1739,686 V843 H1700 L1618,1058 L1538,843 Z" fill="#fcc70a" />
      </g>
      <rect x="1464" y="492" width="308" height="646" fill="url(#marker-hatch)" />
    </g>
  );
}

function AreaMap() {
  const yellow = "M1085,1330 Q1170,1285 1260,1305 Q1330,1350 1400,1365 Q1490,1380 1540,1460 Q1610,1530 1700,1560 Q1780,1640 1860,1640 Q1920,1650 2060,1780 L2160,1850 Q2250,1900 2275,1980 Q2330,2050 2325,2080 L2312,2256 M2060,1780 L2010,1850 L1900,2030 Q1880,2060 1840,2058 L1650,2050 Q1560,2060 1450,2100 L1340,2125 Q1300,2150 1240,2256";
  const orange = "M455,2256 L720,1850 L840,1670 Q950,1430 1090,1325";
  const halls = "M1090,1325 L1210,1590 L1440,2040 L1560,2256";
  const lane = "M462,500 Q450,590 540,690 Q620,770 740,800 Q870,850 925,990 Q1010,1180 1085,1320";
  return (
    <svg viewBox="0 15 3240 2241" className="block h-auto w-full bg-[#f2efe9]" role="img" aria-label="Map of Old Jamestown">
      <Landcover />
      <Water />
      <Boundaries />
      <g fill="none" stroke="#7d9c6f" strokeWidth="4" opacity="0.75">
        {TREES.map(([x, y]) => (
          <path key={`${x}-${y}`} d={`M${x - 20},${y} a20,22 0 1 1 40,0 a20,22 0 1 1 -40,0 M${x},${y + 22} v32`} />
        ))}
        <path d="M1750,1165 l14,-25 l14,25 z M1764,1165 v12 M1784,1140 l9,18 l9,-18 M1793,1158 v20 M1830,1345 l12,-25 l10,25 M1645,1410 a14,14 0 1 1 28,0 a14,14 0 1 1 -28,0 M1659,1425 v18 M1680,1425 l12,-30 l12,30 z M2465,280 h36 M2483,280 v-25 M2475,280 l-10,-18 M2491,280 l10,-18 M2312,125 l5,20 h14 M2535,335 l8,24 l12,6" />
      </g>
      <g>
        <Line d="M540,1800 L620,1930 L700,2040" stroke="#add19e" width={8} />
        <Line d="M215,1765 L380,1870" stroke="#add19e" width={7} />
      </g>
      <Tiled paths={MINOR} stroke="#c9c6cb" width={14} />
      <Tiled paths={LOCAL} stroke="#bab6bd" width={18} />
      <Tiled paths={MEDIUM} stroke="#b9b5b8" width={25} />
      <Line d="M0,35 L158,55 L168,15" stroke="#b9b5b8" width={22} />
      <Tiled paths={MINOR} stroke="#ffffff" width={9} />
      <Tiled paths={LOCAL} stroke="#ffffff" width={12} />
      <Tiled paths={MEDIUM} stroke="#ffffff" width={19} />
      <Line d="M0,35 L158,55 L168,15" stroke="#ffffff" width={15} />
      <Line d={lane} stroke="#b3a3b3" width={22} />
      <Line d={lane} stroke="#ffffff" width={15} />
      <Line d={lane} stroke="#b79bbb" width={6} dash="14 10" />
      <Line d={yellow} stroke="#a9ab69" width={36} />
      <Line d={yellow} stroke="#f2f6ae" width={30} />
      <Line d={orange} stroke="#ae864a" width={38} />
      <Line d={orange} stroke="#fbcb8c" width={32} />
      <Line d={halls} stroke="#ae864a" width={38} />
      <Line d={halls} stroke="#f3c08c" width={32} />
      <Line d={halls} stroke="#b9836d" width={5} dash="14 8" />
      <Line d="M1345,2124 Q1300,2150 1240,2256" stroke="#aaa15c" width={5} dash="20 10" />
      <path d="M3120,2256 L3160,2248 L3240,2238 L3240,2256 Z" fill="#fbc07a" />
      <MapLabels />
      <Marker />
    </svg>
  );
}

/* ---------- Status bar ---------- */

function StatusBar() {
  return (
    <div className="flex h-14 items-center bg-black pr-12 pl-[46px] text-[32px] leading-8 font-medium text-white">
      <span className="w-[84px] pt-1 text-[30px]">7:11</span>
      <svg viewBox="0 0 24 32" className="h-8 w-6" fill="#fff">
        <path d="M9.500 0 H14.500 V14 H20.500 L12 23 L3.500 14 H9.500 Z M0 29 H24 V32 H0 Z" />
      </svg>
      <div className="relative ml-[21px] flex size-9 items-center justify-center">
        <svg viewBox="0 0 36 36" className="absolute inset-0 size-9" fill="none" stroke="#fff">
          <circle cx="18" cy="18" r="16" strokeWidth="1" strokeOpacity="0.6" />
          <path d="M18 2 A16 16 0 1 1 2 19" strokeWidth="3" />
        </svg>
        <span className="text-[21px] leading-6">73</span>
      </div>
      <div className="ml-auto flex items-center">
        <svg viewBox="0 0 30 30" className="mr-[26px] size-[30px]" fill="none" stroke="#fff" strokeWidth="2.400">
          <circle cx="15" cy="16.500" r="12" />
          <path d="M15 10 V17 L20 21" />
          <path d="M1.500 6.500 L8 1.500 M28.500 6.500 L22 1.500" strokeWidth="3" />
        </svg>
        <svg viewBox="0 0 24 30" className="mr-[22px] h-[30px] w-6" fill="none" stroke="#fff" strokeWidth="2.400">
          <path d="M12 27.500 C6 20 2.500 15 2.500 11 A9.500 9.500 0 0 1 21.500 11 C21.500 15 18 20 12 27.500 Z" />
          <circle cx="12" cy="11" r="3.500" fill="#fff" stroke="none" />
        </svg>
        <svg viewBox="0 0 36 30" className="mr-0.5 h-[30px] w-9" fill="#fff">
          <path d="M18 29.500 L0.500 8.500 Q17 -6.500 35.500 8.500 Z" />
          <path d="M5 9.500 Q17.500 -1 31 9.500 L29 12 Q18 3.500 7 12 Z" fill="#000" />
        </svg>
        <svg viewBox="0 0 30 30" className="mr-4 size-[30px]" fill="#fff">
          <path fillRule="evenodd" d="M30 0 V29.500 H0 Z M27 7 L14 20 V26.500 H27 Z" />
        </svg>
        <svg viewBox="0 0 18 30" className="mr-2 h-[30px] w-[18px]" fill="#fff">
          <path fillRule="evenodd" d="M5 0 H13 V3 H16 Q18 3 18 5 V28 Q18 30 16 30 H2 Q0 30 0 28 V5 Q0 3 2 3 H5 Z M3 6 V11 H15 V6 Z" />
        </svg>
        <span className="pt-1 text-[34px]">73%</span>
      </div>
    </div>
  );
}

/* ---------- Achievement tiles ---------- */

function StarBadge() {
  return (
    <svg viewBox="0 0 490 520" className="block h-full w-full" preserveAspectRatio="none">
      <defs>
        <pattern id="badge-hatch" width="14" height="14" patternUnits="userSpaceOnUse" patternTransform="rotate(45)">
          <rect width="5" height="14" fill="#808080" fillOpacity="0.06" />
        </pattern>
      </defs>
      <rect y="350" width="490" height="170" fill="#7b7b7b" />
      <circle cx="245" cy="260" r="260" fill="#188ded" />
      <path
        d="M245 120 L288 213 L393 227 L321 299 L336 400 L245 354 L155 400 L170 299 L98 227 L202 213 Z"
        fill="#fff"
        stroke="#fff"
        strokeWidth="26"
        strokeLinejoin="round"
      />
      <rect width="490" height="520" fill="url(#badge-hatch)" />
    </svg>
  );
}

function RibbonBadge() {
  return (
    <svg viewBox="0 0 490 520" className="block h-full w-full bg-[#f6f6f6]" fill="#20aae2" preserveAspectRatio="none">
      <path
        fillRule="evenodd"
        d="M206 39 L246 56 L286 39 L311 75 L356 80 L360 124 L395 149 L379 187 L395 228 L360 253 L356 298 L311 301 L286 337 L246 320 L206 337 L181 301 L135 298 L132 253 L96 228 L114 187 L96 149 L132 124 L135 80 L180 75 Z M332 188 A86 86 0 1 0 160 188 A86 86 0 1 0 332 188 Z"
      />
      <path d="M180 322 L202 352 L245 334 L193 482 L128 417 Z M312 322 L290 352 L247 334 L299 482 L362 417 Z" />
    </svg>
  );
}

const DAYS = ["Day 1", "Day 2", "Day 3", "Day 4", "Day 5"];

export default function App() {
  return (
    <div className="flex min-h-screen flex-col bg-[#fafafa] font-[Roboto,sans-serif]">
      <StatusBar />
      <header className="flex h-[131px] items-center bg-[#2196f3] pl-[37px] text-white shadow-[0_12px_14px_-10px_rgba(0,0,0,0.26),0_16px_36px_-6px_rgba(0,0,0,0.08)]">
        <button type="button" aria-label="Open menu" className="flex size-14 items-center justify-center">
          <svg viewBox="0 0 42 30" className="h-[30px] w-[42px]" fill="#fff">
            <path d="M0 0 H42 V5 H0 Z M0 12 H42 V17 H0 Z M0 24 H42 V29 H0 Z" />
          </svg>
        </button>
        <h1 className="ml-[57px] text-[47px] leading-[56px] font-medium">Just Don't</h1>
      </header>

      <main className="flex flex-1 flex-col pt-[68px]">
        <AreaMap />
        <section className="flex flex-1 items-center justify-center pt-[61px]">
          <ul className="grid w-[817px] max-w-full grid-cols-5">
            {DAYS.map((day, i) => (
              <li key={day} className="relative h-[173px] overflow-hidden">
                {i === 0 ? <StarBadge /> : <RibbonBadge />}
                <span className="absolute inset-x-0 bottom-0 h-[19px] bg-black/50 pl-[11px] text-base leading-5 text-white">
                  {day}
                </span>
              </li>
            ))}
          </ul>
        </section>
      </main>

      <nav className="grid h-28 grid-cols-[472px_136px_1fr] items-center bg-black">
        <button type="button" aria-label="Back" className="flex h-14 items-center justify-center">
          <svg viewBox="0 0 14 24" className="h-6 w-3.5" fill="none" stroke="#fff" strokeWidth="3">
            <path d="M12.500 1.500 L2 12 L12.500 22.500" />
          </svg>
        </button>
        <button type="button" aria-label="Home" className="flex h-14 items-center justify-center">
          <span className="h-[23px] w-[65px] rounded-full bg-white" />
        </button>
      </nav>
    </div>
  );
}
